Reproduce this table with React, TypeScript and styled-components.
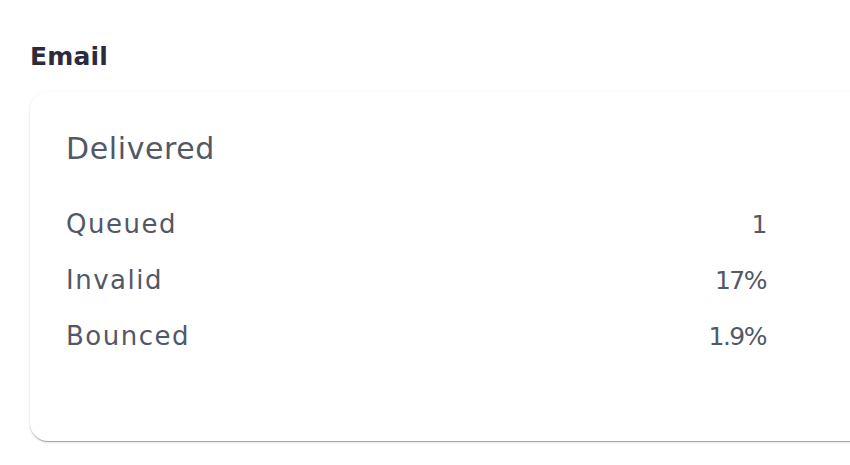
import React from "react";
import styled, { createGlobalStyle } from "styled-components";

const Global = createGlobalStyle`
  html, body { margin: 0; padding: 0; background: #ffffff; overflow: hidden; }
  body { font-family: "DejaVu Sans", "Noto Sans", sans-serif; }
`;

const Page = styled.div`
  width: 850px;
  height: 465px;
  padding: 40px 0 0 30px;
  box-sizing: border-box;
  overflow: hidden;
`;

const SectionTitle = styled.h2`
  margin: 0;
  font-size: 25px;
  line-height: 34px;
  font-weight: 700;
  color: #2a2c3d;
  letter-spacing: 0.2px;
`;

const Card = styled.div`
  margin-top: 18px;
  width: 900px;
  height: 349px;
  box-sizing: border-box;
  background: #ffffff;
  border-radius: 18px;
  padding: 36px 36px 0 36px;
  box-shadow: 0 2px 1px -1px rgba(0, 0, 0, 0.2), 0 1px 1px 0 rgba(0, 0, 0, 0.14),
    0 1px 3px 0 rgba(0, 0, 0, 0.12);
`;

const CardTitle = styled.div`
  font-size: 30px;
  line-height: 42px;
  color: #535867;
  letter-spacing: 0.6px;
  margin-bottom: 26px;
`;

const Rows = styled.div`
  width: 701px;
  display: flex;
  flex-direction: column;
`;

const Row = styled.div`
  display: flex;
  justify-content: space-between;
  align-items: baseline;
  height: 56px;
  line-height: 56px;
  font-size: 26px;
  color: #535867;
  letter-spacing: 1.5px;
`;

const Value = styled.span`
  font-size: 25px;
  letter-spacing: -1.5px;
  padding-right: 1px;
`;

const rows = [
  { label: "Queued", value: "1" },
  { label: "Invalid", value: "17%" },
  { label: "Bounced", value: "1.9%" },
];

export default function App() {
  return (
    <>
      <Global />
      <Page>
        <SectionTitle>Email</SectionTitle>
        <Card>
          <CardTitle>Delivered</CardTitle>
          <Rows>
            {rows.map((r) => (
              <Row key={r.label}>
                <span>{r.label}</span>
                <Value>{r.value}</Value>
              </Row>
            ))}
          </Rows>
        </Card>
      </Page>
    </>
  );
}
